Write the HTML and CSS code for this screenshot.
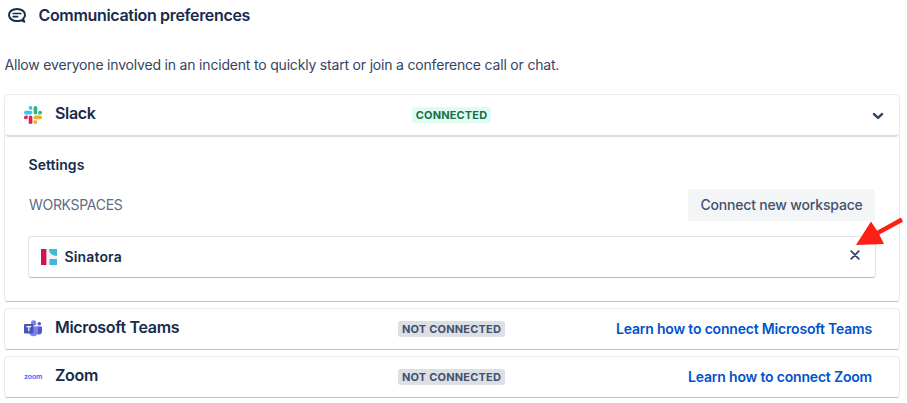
FILE: index.html
```html
<!DOCTYPE html>
<html lang="en">
<head>
    <meta charset="UTF-8">
    <meta name="viewport" content="width=device-width, initial-scale=1.0">
    <title>Communication preferences</title>
    <link rel="stylesheet" href="styles.css">
</head>
<body>
    <header class="page-header">
        <svg class="chat-icon" width="20" height="18" viewBox="0 0 20 18" fill="none" stroke="#172b4d" stroke-width="2" stroke-linecap="round" stroke-linejoin="round">
            <path d="M10 1.900c-4.500 0-8 2.600-8 6.100s3.500 6.100 8 6.100c1.500 0 2.900-.3 4-.8l3.300 1.300-1.300-2.600c1.200-1.100 2-2.500 2-4 0-3.500-3.500-6.100-8-6.100z"/>
            <path d="M6.200 6.500h7.600M6.200 9.700h4.400" stroke-width="1.700"/>
        </svg>
        <h1>Communication preferences</h1>
    </header>
    <p class="intro">Allow everyone involved in an incident to quickly start or join a conference call or chat.</p>

    <main class="integrations">
        <section class="card expanded">
            <div class="card-header">
                <div class="card-name">
                    <svg class="logo" width="18" height="18" viewBox="0 0 18 18">
                        <g fill="#36c5f0"><rect x="0" y="4.700" width="8.300" height="3.700" rx="1.850"/><path d="M6.500 0a1.850 1.850 0 1 0 0 3.700h1.850V1.850A1.850 1.850 0 0 0 6.500 0z"/></g>
                        <g fill="#2eb67d"><rect x="9.600" y="0" width="3.700" height="8.400" rx="1.850"/><path d="M18 6.550a1.850 1.850 0 1 0-3.700 0V8.400h1.850A1.850 1.850 0 0 0 18 6.550z"/></g>
                        <g fill="#ecb22e"><rect x="9.600" y="9.600" width="8.400" height="3.700" rx="1.850"/><path d="M11.450 18a1.850 1.850 0 1 0 0-3.700H9.600v1.850A1.850 1.850 0 0 0 11.450 18z"/></g>
                        <g fill="#e01e5a"><rect x="4.700" y="9.600" width="3.700" height="8.400" rx="1.850"/><path d="M0 11.450a1.850 1.850 0 1 0 3.700 0V9.600H1.850A1.850 1.850 0 0 0 0 11.450z"/></g>
                    </svg>
                    <h2>Slack</h2>
                </div>
                <span class="badge connected">Connected</span>
                <svg class="chevron" width="12" height="8" viewBox="0 0 12 8" fill="none" stroke="#344563" stroke-width="2.500" stroke-linecap="round" stroke-linejoin="round">
                    <path d="M2 2.200l4 3.700 4-3.700"/>
                </svg>
            </div>
            <div class="settings">
                <h3>Settings</h3>
                <div class="workspaces-bar">
                    <span class="label">WORKSPACES</span>
                    <button class="connect">Connect new workspace</button>
                </div>
                <div class="workspace">
                    <svg class="workspace-logo" width="16" height="16" viewBox="0 0 16 16">
                        <path fill="#f3eff3" d="M0 0h16v16H0z"/>
                        <path fill="#c9184a" d="M0 0h5v16H0z"/>
                        <path fill="#e5a3b7" d="M5 0h1v16H5z"/>
                        <path fill="#3eb8d8" d="M8 0h8v7c-4.500 0-8-3-8-7zM8.500 10H16v6H8.500z"/>
                    </svg>
                    <span class="workspace-name">Sinatora</span>
                    <button class="remove" aria-label="Remove workspace">
                        <svg width="10" height="10" viewBox="0 0 10 10" fill="none" stroke="#344563" stroke-width="1.800" stroke-linecap="round">
                            <path d="M1.200 1.200l7.600 7.600M8.800 1.200L1.200 8.800"/>
                        </svg>
                    </button>
                    <svg class="arrow" width="48" height="30" viewBox="0 0 48 30">
                        <path fill="#ff2015" d="M0 28L15 4.500l6 9.300L45 .5l2 4.200L23.300 17.500l4.700 9.500z"/>
                    </svg>
                </div>
            </div>
        </section>

        <section class="card">
            <div class="card-header">
                <div class="card-name">
                    <svg class="logo" width="18" height="18" viewBox="0 0 18 18">
                        <circle cx="15.300" cy="3.800" r="1.800" fill="#5059c9"/>
                        <path fill="#5059c9" d="M12.500 6.500h4.700c.5 0 .8.300.8.800v4.200a3 3 0 0 1-5.500 1.700z"/>
                        <circle cx="9.600" cy="2.900" r="2.600" fill="#7b83eb"/>
                        <path fill="#7b83eb" d="M5 6.500h8.200c.5 0 .8.300.8.800v5.200a4.600 4.600 0 0 1-9 0z"/>
                        <path fill="#4b53bc" d="M1 4h7.500a1 1 0 0 1 1 1v7.500a1 1 0 0 1-1 1H1a1 1 0 0 1-1-1V5a1 1 0 0 1 1-1z"/>
                        <path fill="none" stroke="#fff" stroke-width="1.200" d="M2.500 6.700h4.600M4.800 6.700v4.600"/>
                    </svg>
                    <h2>Microsoft Teams</h2>
                </div>
                <span class="badge">Not connected</span>
                <a class="learn" href="#">Learn how to connect Microsoft Teams</a>
            </div>
        </section>

        <section class="card">
            <div class="card-header">
                <div class="card-name">
                    <span class="logo zoom-logo">zoom</span>
                    <h2>Zoom</h2>
                </div>
                <span class="badge">Not connected</span>
                <a class="learn" href="#">Learn how to connect Zoom</a>
            </div>
        </section>
    </main>
</body>
</html>
```

FILE: styles.css
```css
* {
    margin: 0;
    padding: 0;
    box-sizing: border-box;
}

body {
    background: #fff;
    color: #172b4d;
    font-family: Inter, "Liberation Sans", sans-serif;
    font-size: 14px;
    line-height: 20px;
    overflow: hidden;
}

/* Page header */
.page-header {
    display: flex;
    align-items: center;
    gap: 11.5px;
    height: 32px;
    padding-left: 7px;
}

h1,
h2 {
    font-size: 16px;
    font-weight: 600;
    letter-spacing: -0.33px;
}

h1 {
    margin-top: -2px;
}

.intro {
    margin: 23px 0 19px 4.5px;
    color: #344563;
    letter-spacing: -0.19px;
    white-space: nowrap;
}

/* Integration cards */
.integrations {
    display: flex;
    flex-direction: column;
    gap: 6px;
    width: 900px;
    padding-left: 4px;
}

.card {
    border: 1px solid #ebecf0;
    border-bottom-color: #c1c4cb;
    border-radius: 4px;
}

.card-header {
    display: grid;
    grid-template-columns: 1fr auto 1fr;
    align-items: center;
    height: 40px;
    padding: 0 20px 0 19px;
}

.expanded .card-header {
    height: 42px;
    border-bottom: 2px solid #d9dce1;
    border-radius: 4px;
}

.card-name {
    display: flex;
    align-items: center;
    gap: 13px;
}

.card-name h2 {
    margin-top: -4px;
}

.logo {
    flex: none;
    width: 18px;
}

.zoom-logo {
    color: #2d6bff;
    font-size: 7px;
    font-weight: 600;
    letter-spacing: -0.1px;
}

.badge {
    padding: 0 4px;
    border-radius: 3px;
    background: #dcdfe4;
    color: #42526e;
    font-size: 11px;
    font-weight: 700;
    letter-spacing: 0.2px;
    line-height: 16px;
    text-transform: uppercase;
}

.connected {
    background: #dffcf0;
    color: #216e4e;
    letter-spacing: 0.15px;
}

.chevron {
    justify-self: end;
    margin: 1px -5px 0 0;
}

.learn {
    justify-self: end;
    padding-right: 7px;
    color: #0052cc;
    font-weight: 600;
    letter-spacing: -0.19px;
    text-decoration: none;
    white-space: nowrap;
}

/* Slack settings */
.settings {
    padding: 18px 23px 23px;
}

h3 {
    padding-left: 0.5px;
    font-size: 14px;
    font-weight: 600;
    letter-spacing: 0.05px;
}

.workspaces-bar {
    display: flex;
    align-items: center;
    justify-content: space-between;
    margin: 14px 0 15px;
    padding: 0 1px;
}

.label {
    color: #5e6c84;
    letter-spacing: -0.3px;
}

.connect {
    width: 187px;
    height: 32px;
    border: none;
    border-radius: 3px;
    background: #f4f5f7;
    color: #42526e;
    font: 500 14px/30px Inter, sans-serif;
    letter-spacing: -0.18px;
    cursor: pointer;
}

.workspace {
    position: relative;
    display: flex;
    align-items: center;
    height: 42px;
    padding: 0 15px 0 12px;
    border: 1px solid #dfe1e6;
    border-bottom-color: #b3b9c4;
    border-radius: 4px;
}

.workspace-name {
    margin-left: 7.5px;
    font-weight: 600;
    letter-spacing: 0.15px;
}

.remove {
    display: flex;
    margin: -4px 0 0 auto;
    border: none;
    background: none;
    cursor: pointer;
}

/* Pointer to the remove button */
.arrow {
    position: absolute;
    top: -20px;
    right: -29px;
}
```
